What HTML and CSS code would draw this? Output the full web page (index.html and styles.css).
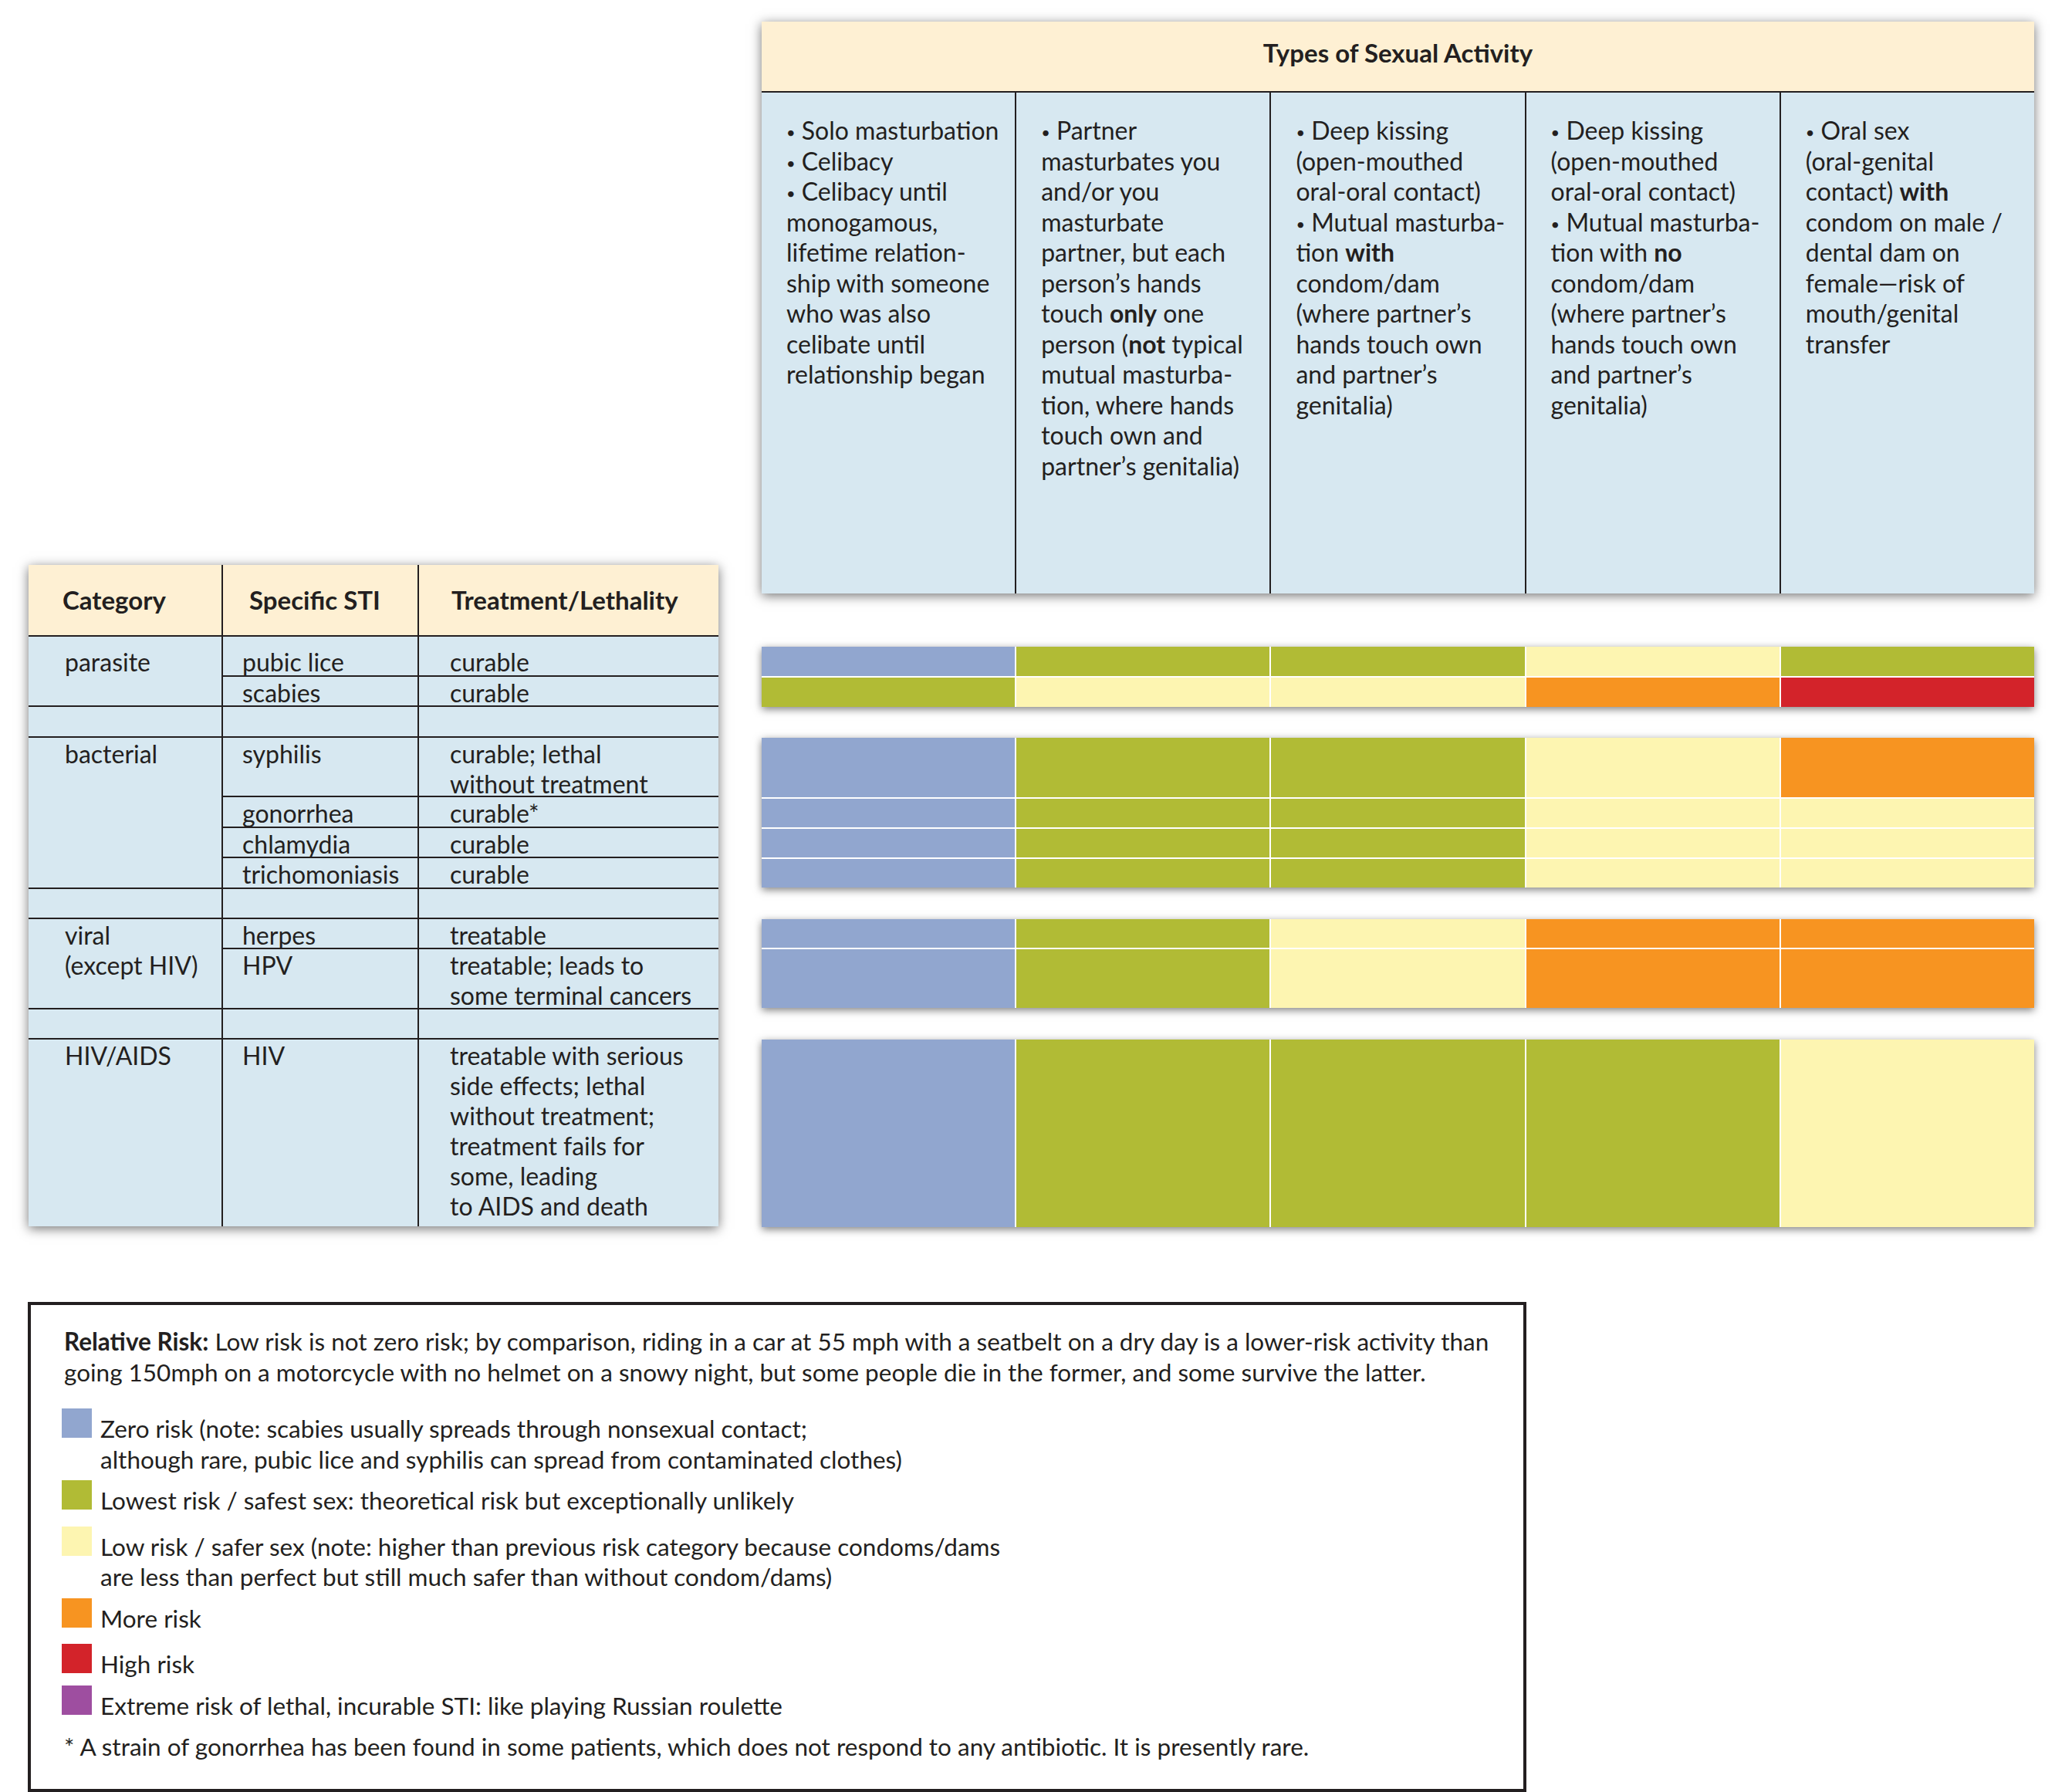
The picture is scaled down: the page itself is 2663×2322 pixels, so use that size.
FILE: index.html
```html
<!DOCTYPE html>
<html lang="en">
<head>
<meta charset="utf-8">
<title>Types of Sexual Activity and STI Risk</title>
<link rel="stylesheet" href="styles.css">
</head>
<body>
<div class="page">
  <div class="top">
    <div class="left-col">
      <div class="sti-table">
        <div class="cell head c1">Category</div>
        <div class="cell head c2">Specific STI</div>
        <div class="cell head c3">Treatment/Lethality</div>

        <div class="cell c1 span2 pad-first">parasite</div>
        <div class="cell c2 pad-first">pubic lice</div>
        <div class="cell c3 pad-first">curable</div>
        <div class="cell c2">scabies</div>
        <div class="cell c3">curable</div>

        <div class="cell"></div><div class="cell"></div><div class="cell"></div>

        <div class="cell c1 span4">bacterial</div>
        <div class="cell c2">syphilis</div>
        <div class="cell c3">curable; lethal<br>without treatment</div>
        <div class="cell c2">gonorrhea</div>
        <div class="cell c3">curable*</div>
        <div class="cell c2">chlamydia</div>
        <div class="cell c3">curable</div>
        <div class="cell c2">trichomoniasis</div>
        <div class="cell c3">curable</div>

        <div class="cell"></div><div class="cell"></div><div class="cell"></div>

        <div class="cell c1 span2">viral<br>(except HIV)</div>
        <div class="cell c2">herpes</div>
        <div class="cell c3">treatable</div>
        <div class="cell c2">HPV</div>
        <div class="cell c3">treatable; leads to<br>some terminal cancers</div>

        <div class="cell"></div><div class="cell"></div><div class="cell"></div>

        <div class="cell c1">HIV/AIDS</div>
        <div class="cell c2">HIV</div>
        <div class="cell c3">treatable with serious<br>side effects; lethal<br>without treatment;<br>treatment fails for<br>some, leading<br>to AIDS and death</div>
      </div>
    </div>

    <div class="right-col">
      <div class="activity">
        <div class="act-head">Types of Sexual Activity</div>
        <div class="act-cell"><span class="bul">•</span> Solo masturbation<br><span class="bul">•</span> Celibacy<br><span class="bul">•</span> Celibacy until<br>monogamous,<br>lifetime relation-<br>ship with someone<br>who was also<br>celibate until<br>relationship began</div>
        <div class="act-cell"><span class="bul">•</span> Partner<br>masturbates you<br>and/or you<br>masturbate<br>partner, but each<br>person’s hands<br>touch <b>only</b> one<br>person (<b>not</b> typical<br>mutual masturba-<br>tion, where hands<br>touch own and<br>partner’s genitalia)</div>
        <div class="act-cell"><span class="bul">•</span> Deep kissing<br>(open-mouthed<br>oral-oral contact)<br><span class="bul">•</span> Mutual masturba-<br>tion <b>with</b><br>condom/dam<br>(where partner’s<br>hands touch own<br>and partner’s<br>genitalia)</div>
        <div class="act-cell"><span class="bul">•</span> Deep kissing<br>(open-mouthed<br>oral-oral contact)<br><span class="bul">•</span> Mutual masturba-<br>tion with <b>no</b><br>condom/dam<br>(where partner’s<br>hands touch own<br>and partner’s<br>genitalia)</div>
        <div class="act-cell"><span class="bul">•</span> Oral sex<br>(oral-genital<br>contact) <b>with</b><br>condom on male /<br>dental dam on<br>female—risk of<br>mouth/genital<br>transfer</div>
      </div>

      <div class="bars bars-parasite">
        <div class="z"></div><div class="l1"></div><div class="l1"></div><div class="l2"></div><div class="l1"></div>
        <div class="l1"></div><div class="l2"></div><div class="l2"></div><div class="m"></div><div class="h"></div>
      </div>

      <div class="bars bars-bacterial">
        <div class="z"></div><div class="l1"></div><div class="l1"></div><div class="l2"></div><div class="m"></div>
        <div class="z"></div><div class="l1"></div><div class="l1"></div><div class="l2"></div><div class="l2"></div>
        <div class="z"></div><div class="l1"></div><div class="l1"></div><div class="l2"></div><div class="l2"></div>
        <div class="z"></div><div class="l1"></div><div class="l1"></div><div class="l2"></div><div class="l2"></div>
      </div>

      <div class="bars bars-viral">
        <div class="z"></div><div class="l1"></div><div class="l2"></div><div class="m"></div><div class="m"></div>
        <div class="z"></div><div class="l1"></div><div class="l2"></div><div class="m"></div><div class="m"></div>
      </div>

      <div class="bars bars-hiv">
        <div class="z"></div><div class="l1"></div><div class="l1"></div><div class="l1"></div><div class="l2"></div>
      </div>
    </div>
  </div>

  <div class="legend">
    <p class="intro"><b>Relative Risk:</b> Low risk is not zero risk; by comparison, riding in a car at 55 mph with a seatbelt on a dry day is a lower-risk activity than<br>going 150mph on a motorcycle with no helmet on a snowy night, but some people die in the former, and some survive the latter.</p>
    <div class="item gap-s"><span class="swatch z"></span><span class="item-text">Zero risk (note: scabies usually spreads through nonsexual contact;<br>although rare, pubic lice and syphilis can spread from contaminated clothes)</span></div>
    <div class="item gap-l"><span class="swatch l1"></span><span class="item-text">Lowest risk / safest sex: theoretical risk but exceptionally unlikely</span></div>
    <div class="item gap-s"><span class="swatch l2"></span><span class="item-text">Low risk / safer sex (note: higher than previous risk category because condoms/dams<br>are less than perfect but still much safer than without condom/dams)</span></div>
    <div class="item gap-l"><span class="swatch m"></span><span class="item-text">More risk</span></div>
    <div class="item gap-s"><span class="swatch h"></span><span class="item-text">High risk</span></div>
    <div class="item"><span class="swatch x"></span><span class="item-text">Extreme risk of lethal, incurable STI: like playing Russian roulette</span></div>
    <p class="foot">* A strain of gonorrhea has been found in some patients, which does not respond to any antibiotic. It is presently rare.</p>
  </div>
</div>
</body>
</html>
```
FILE: styles.css
```css
html, body {
  margin: 0;
  padding: 0;
  background: #ffffff;
}

body {
  font-family: "Lato", "Open Sans", sans-serif;
  font-size: 32px;
  line-height: 39.5px;
  color: #231f20;
}

b { font-weight: 700; }

.page {
  width: 2663px;
  padding-left: 37px;
  box-sizing: border-box;
}

.top {
  display: flex;
  align-items: flex-start;
  gap: 56px;
}

.left-col {
  width: 894px;
  padding-top: 732px;
}

.right-col {
  width: 1649px;
  padding-top: 28px;
}

/* ---------- STI table ---------- */
.sti-table {
  display: grid;
  grid-template-columns: 250px 252px 388px;
  grid-template-rows: 91px 50px 37px 38px 75px 38px 37px 38px 37px 37px 76px 37px 242px;
  gap: 2px;
  background: #231f20;
  box-shadow: 0 3px 14px rgba(0, 0, 0, 0.55);
}

.cell {
  background: #d7e8f1;
  white-space: nowrap;
  padding-top: 1px;
  line-height: 39px;
}

.cell.head {
  background: #fef0d3;
  font-weight: 700;
  font-size: 33px;
  display: flex;
  align-items: center;
  padding-top: 0;
}

.c1 { padding-left: 47px; }
.c2 { padding-left: 25px; }
.c3 { padding-left: 40px; }
.head.c1 { padding-left: 44px; }
.head.c2 { padding-left: 34px; }
.head.c3 { padding-left: 42px; }

.pad-first { padding-top: 13px; }
.span2 { grid-row: span 2; }
.span4 { grid-row: span 4; }

/* ---------- Activity table ---------- */
.activity {
  display: grid;
  grid-template-columns: repeat(5, 1fr);
  grid-template-rows: 90px 649px;
  gap: 2px;
  background: #231f20;
  box-shadow: 0 3px 14px rgba(0, 0, 0, 0.55);
}

.act-head {
  grid-column: 1 / -1;
  background: #fef0d3;
  font-weight: 700;
  font-size: 33px;
  display: flex;
  align-items: center;
  justify-content: center;
  padding-bottom: 8px;
}

.act-cell {
  background: #d7e8f1;
  padding: 29px 0 0 32px;
  white-space: nowrap;
}

.bul {
  font-size: 20px;
  line-height: 0;
  vertical-align: 2px;
}

/* ---------- Risk bars ---------- */
.bars {
  display: grid;
  grid-template-columns: repeat(5, 1fr);
  gap: 2px;
  background: #ffffff;
  box-shadow: 0 3px 10px rgba(0, 0, 0, 0.5);
}

.bars-parasite { margin-top: 69px; grid-template-rows: 38px 38px; }
.bars-bacterial { margin-top: 40px; grid-template-rows: 77px 37px 37px 37px; }
.bars-viral { margin-top: 41px; grid-template-rows: 37px 76px; }
.bars-hiv { margin-top: 41px; grid-template-rows: 243px; }

.z { background: #91a6cf; }
.l1 { background: #b1bb35; }
.l2 { background: #fdf5b1; }
.m { background: #f79421; }
.h { background: #d3232a; }
.x { background: #9e4ea0; }

/* ---------- Legend ---------- */
.legend {
  margin-top: 97px;
  width: 1942px;
  margin-left: -1px;
  box-sizing: border-box;
  border: 4px solid #231f20;
  padding: 28px 40px 34px 40px;
  white-space: nowrap;
  font-size: 31.5px;
}

.legend p { margin: 0; }

.intro {
  margin-left: 3px !important;
  margin-bottom: 27px !important;
}

.item {
  display: flex;
  align-items: flex-start;
}

.gap-s { margin-bottom: 7px; }
.gap-l { margin-bottom: 13px; }

.swatch {
  flex: none;
  width: 39px;
  height: 38px;
  margin-right: 11px;
}

.item-text {
  padding-top: 7px;
}

.foot {
  margin-left: 3px !important;
  margin-top: 14px !important;
}
```
